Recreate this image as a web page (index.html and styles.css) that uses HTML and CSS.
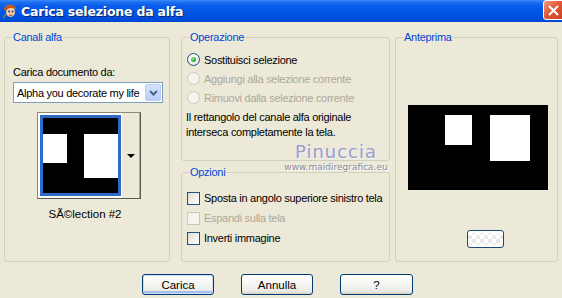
FILE: index.html
```html
<!DOCTYPE html>
<html>
<head>
<meta charset="utf-8">
<link rel="stylesheet" href="styles.css">
</head>
<body>
<div class="window">
  <div class="titlebar">
    <svg class="app-icon" width="16" height="16" viewBox="0 0 16 16">
      <path d="M2 6 Q4 1 9 2 Q14 2 14 7 L13 6 Q12 3 8 4 Q4 4 3 8 Z" fill="#D2691E"/>
      <ellipse cx="8.5" cy="9" rx="4.5" ry="5" fill="#F5C9A0"/>
      <path d="M3 5 Q6 2 11 3 Q13 4 13.5 6 Q10 4 7 5 Q5 6 4 8 Z" fill="#C0501A"/>
      <circle cx="7" cy="8.5" r="1" fill="#2A4A80"/>
      <circle cx="10.5" cy="8.5" r="1" fill="#2A4A80"/>
      <path d="M7 12 Q8.7 13.2 10.5 12" stroke="#A03020" stroke-width="0.9" fill="none"/>
      <path d="M1 15 L4 11" stroke="#6A8A30" stroke-width="1.6"/>
    </svg>
    <span class="title">Carica selezione da alfa</span>
    <div class="close">
      <svg width="13" height="13" viewBox="0 0 13 13"><path d="M2 2 L11 11 M11 2 L2 11" stroke="#fff" stroke-width="2"/></svg>
    </div>
  </div>

  <div class="main">
    <fieldset class="group g-left">
      <legend>Canali alfa</legend>
      <div class="lbl">Carica documento da:</div>
      <div class="select">
        <span class="sel-text">Alpha you decorate my life</span>
        <span class="sel-btn"><svg width="9" height="6" viewBox="0 0 9 6"><path d="M1 1 L4.5 4.5 L8 1" stroke="#4D6185" stroke-width="2" fill="none"/></svg></span>
      </div>
      <div class="thumb">
        <div class="thumb-img"><div class="tsq tsq1"></div><div class="tsq tsq2"></div></div>
        <div class="thumb-btn"><span class="tri"></span></div>
      </div>
      <div class="caption">SÃ©lection #2</div>
    </fieldset>

    <div class="mid">
      <fieldset class="group g-op">
        <legend>Operazione</legend>
        <div class="rows">
          <div class="row"><span class="radio checked"></span><span>Sostituisci selezione</span></div>
          <div class="row disabled"><span class="radio"></span><span>Aggiungi alla selezione corrente</span></div>
          <div class="row disabled"><span class="radio"></span><span>Rimuovi dalla selezione corrente</span></div>
        </div>
        <p class="note">Il rettangolo del canale alfa originale<br>interseca completamente la tela.</p>
      </fieldset>
      <fieldset class="group g-opt">
        <legend>Opzioni</legend>
        <div class="rows opt-rows">
          <div class="row row-c"><span class="check"></span><span class="nowrap">Sposta in angolo superiore sinistro tela</span></div>
          <div class="row row-c disabled"><span class="check"></span><span>Espandi sulla tela</span></div>
          <div class="row row-c"><span class="check"></span><span>Inverti immagine</span></div>
        </div>
      </fieldset>
    </div>

    <fieldset class="group g-prev">
      <legend>Anteprima</legend>
      <div class="preview"><div class="psq psq1"></div><div class="psq psq2"></div></div>
      <div class="small-btn"></div>
    </fieldset>
  </div>

  <div class="buttons">
    <div class="btn default">Carica</div>
    <div class="btn">Annulla</div>
    <div class="btn">?</div>
  </div>

  <div class="watermark">
    <div class="wm1">Pinuccia</div>
    <div class="wm2">www.maidiregrafica.eu</div>
  </div>
</div>
</body>
</html>
```

FILE: styles.css
```css
* { box-sizing: border-box; }
html, body { margin: 0; padding: 0; }
body { font-family: "Liberation Sans", Arial, sans-serif; font-size: 11px; color: #000; letter-spacing: -0.28px; }

.window {
  position: relative;
  width: 562px;
  height: 298px;
  background: #ECE9D8;
  overflow: hidden;
}

.titlebar {
  position: relative;
  height: 22px;
  display: flex;
  align-items: center;
  background: linear-gradient(#3A8CFC 0%, #1F6FF0 10%, #0A5EEA 25%, #0055E5 55%, #0050DE 80%, #0046D0 100%);
  padding-left: 2px;
}
.app-icon { flex: none; }
.title {
  margin-left: 3px;
  color: #fff;
  font-family: "DejaVu Sans", sans-serif;
  font-weight: bold;
  font-size: 12.5px;
  letter-spacing: -0.2px;
  text-shadow: 1px 1px 0 #0A246A;
}
.close {
  position: absolute;
  left: 543px;
  top: 0;
  width: 22px;
  height: 20px;
  border: 1px solid #fff;
  border-radius: 3px;
  background: linear-gradient(135deg, #F09A7E 0%, #E2583A 45%, #C9401E 100%);
  display: flex;
  align-items: center;
  justify-content: center;
  padding-right: 2px;
}

.main {
  display: flex;
  padding: 9px 4px 0 4px;
  height: 240px;
}

.group {
  margin: 0;
  padding: 0;
  border: 1px solid #D0D0BF;
  border-radius: 3px;
  min-width: 0;
}
.group legend {
  margin-left: 7px;
  padding: 0 1px;
  color: #0046D5;
  line-height: 13px;
  font-size: 11px;
}

.g-left { width: 166px; height: 231px; }
.mid { width: 209px; margin-left: 11px; display: flex; flex-direction: column; gap: 5px; height: 231px; }
.g-op { height: 130px; }
.g-opt { height: 96px; }
.g-prev { width: 163px; height: 231px; margin-left: 5px; }

/* left */
.lbl { margin: 22px 0 0 8px; line-height: 13px; }
.select {
  margin: 3px 0 0 8px;
  width: 150px;
  height: 21px;
  border: 1px solid #7F9DB9;
  background: #fff;
  display: flex;
  align-items: center;
  padding: 1px;
}
.sel-text { flex: 1; padding-left: 2px; white-space: nowrap; overflow: hidden; }
.sel-btn {
  width: 16px;
  height: 17px;
  border: 1px solid #B9CDF6;
  border-radius: 2px;
  background: linear-gradient(#D6E3FD, #B7CCF9);
  display: flex;
  align-items: center;
  justify-content: center;
}
.thumb {
  margin: 9px 0 0 32px;
  width: 104px;
  height: 87px;
  border: 1px solid #5A5A50;
  border-top-color: #8A8878;
  border-left-color: #8A8878;
  background: #fff;
  padding: 2px 0 2px 2px;
  display: flex;
}
.thumb-img {
  width: 81px;
  height: 81px;
  border: 3px solid #316AC5;
  background: #000;
  display: flex;
  align-items: flex-start;
  gap: 17px;
  padding-top: 16px;
}
.tsq { background: #fff; }
.tsq1 { width: 24px; height: 29px; }
.tsq2 { width: 34px; height: 44px; }
.thumb-btn {
  flex: 1;
  margin: -2px 0 -2px 0;
  background: #ECE9D8;
  border-left: 1px solid #fff;
  border-right: 1px solid #ACA899;
  display: flex;
  align-items: center;
  justify-content: center;
}
.tri {
  width: 0; height: 0;
  border-left: 4px solid transparent;
  border-right: 4px solid transparent;
  border-top: 4px solid #000;
}
.caption { margin-top: 9px; text-align: center; line-height: 13px; padding-right: 4px; font-size: 11.5px; letter-spacing: 0; }

/* rows */
.rows { padding: 6px 0 0 5px; }
.row { display: flex; align-items: center; height: 19px; gap: 4px; }
.nowrap { white-space: nowrap; }
.row.disabled { color: #ACA899; }
.radio {
  width: 13px; height: 13px;
  border: 1px solid #1C5180;
  border-radius: 50%;
  background: radial-gradient(circle at 40% 40%, #fff 0%, #F4F3EE 50%, #DCD9CD 100%);
  display: flex; align-items: center; justify-content: center;
  flex: none;
}
.radio.checked::after {
  content: "";
  width: 5px; height: 5px; border-radius: 50%;
  background: radial-gradient(circle at 35% 35%, #8FE08F, #21A121 70%);
}
.row.disabled .radio { border-color: #CAC8BB; background: #F4F3EE; }
.note { margin: 3px 0 0 4px; line-height: 15px; }

.opt-rows { padding-top: 9px; }
.row-c { height: 20px; }
.check {
  width: 13px; height: 13px;
  border: 1px solid #1C5180;
  background: linear-gradient(135deg, #DCDBD3 0%, #F0EFEA 50%, #fff 100%);
  flex: none;
}
.row.disabled .check { border-color: #CAC8BB; background: #F4F3EE; }

/* preview */
.preview {
  margin: 61px 0 0 12px;
  width: 140px;
  height: 85px;
  background: #000;
  display: flex;
  align-items: flex-start;
  gap: 18px;
  padding: 10px 0 0 37px;
}
.psq { background: #fff; }
.psq1 { width: 27px; height: 30px; }
.psq2 { width: 40px; height: 46px; }
.small-btn {
  margin: 40px 0 0 71px;
  width: 37px;
  height: 18px;
  border: 1px solid #1C4A74;
  border-radius: 3px;
  background:
    linear-gradient(#fff 0%, rgba(255,255,255,0) 40%, rgba(255,255,255,0) 70%, #fff 100%),
    repeating-conic-gradient(#E6E6E6 0 25%, #FFFFFF 0 50%) 0 0 / 8px 8px;
}

/* buttons */
.buttons {
  display: flex;
  gap: 27px;
  padding-left: 142px;
  margin-top: 12px;
}
.btn {
  width: 72px;
  height: 21px;
  border: 1px solid #003C74;
  border-radius: 3px;
  background: linear-gradient(#FFFFFF 0%, #F7F7F4 40%, #ECEBE6 85%, #D6D0C5 100%);
  display: flex;
  align-items: center;
  justify-content: center;
  font-size: 11.5px;
  letter-spacing: 0;
}
.btn:last-child { width: 73px; }
.btn.default { box-shadow: inset 0 0 0 1px #CEDDF9, inset 0 -2px 0 1px #A7C0F0; }

/* watermark */
.watermark {
  position: absolute;
  left: 280px;
  top: 142px;
  width: 112px;
  text-align: center;
  pointer-events: none;
  letter-spacing: 0;
}
.wm1 {
  font-family: "DejaVu Sans", sans-serif;
  font-size: 18px;
  line-height: 20px;
  color: #9C9CC4;
  letter-spacing: 1px;
  text-shadow: 1px 1px 0 #F4F4FA, -1px 0 0 #E8E8F0;
}
.wm2 {
  font-family: "DejaVu Sans", sans-serif;
  font-size: 9px;
  line-height: 11px;
  color: #8A8A98;
  text-shadow: 1px 1px 0 #fff;
}
```
